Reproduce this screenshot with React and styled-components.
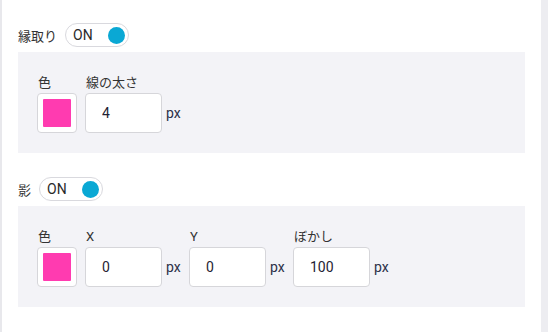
import React from 'react'
import styled, { createGlobalStyle } from 'styled-components'

const sections = [
  {
    title: '縁取り',
    fields: [{ label: '線の太さ', value: '4' }]
  },
  {
    title: '影',
    fields: [
      { label: 'X', value: '0' },
      { label: 'Y', value: '0' },
      { label: 'ぼかし', value: '100' }
    ]
  }
]

const App = () => {
  return (
    <>
      <GlobalStyle />
      <Frame>
        <Content>
          {sections.map(section => (
            <Section key={section.title}>
              <Header>
                <Title>{section.title}</Title>
                <Toggle>
                  <span>ON</span>
                  <Knob />
                </Toggle>
              </Header>
              <Panel>
                <Column>
                  <Label>色</Label>
                  <Swatch>
                    <SwatchFill color="#ff3bb0" />
                  </Swatch>
                </Column>
                {section.fields.map(field => (
                  <Column key={field.label}>
                    <Label>{field.label}</Label>
                    <InputRow>
                      <Input defaultValue={field.value} />
                      <Unit>px</Unit>
                    </InputRow>
                  </Column>
                ))}
              </Panel>
            </Section>
          ))}
        </Content>
        <Scrollbar />
      </Frame>
    </>
  )
}

export default App

//region Style

const GlobalStyle = createGlobalStyle`
  body {
    margin: 0;
    background: #fff;
    font-family: Roboto, "Noto Sans CJK JP", sans-serif;
  }
`

const Frame = styled.div`
  display: flex;
  height: 332px;
  width: 548px;
  box-sizing: border-box;
  border-left: 2px solid #e8e8ec;
`

const Content = styled.div`
  flex: 1;
  box-sizing: border-box;
  padding: 23px 16px 0 16px;
  display: flex;
  flex-direction: column;
  gap: 24px;
`

const Scrollbar = styled.div`
  width: 7px;
  background: #ededf1;
`

const Section = styled.div`
  display: flex;
  flex-direction: column;
  gap: 5px;
`

const Header = styled.div`
  display: flex;
  align-items: center;
  gap: 8px;
`

const Title = styled.div`
  font-size: 13px;
  color: #333;
`

const Toggle = styled.div`
  box-sizing: border-box;
  width: 64px;
  height: 24px;
  border: 1px solid #d9d9de;
  border-radius: 12px;
  background: #fff;
  display: flex;
  align-items: center;
  justify-content: space-between;
  padding: 0 3px 0 7px;
  font-size: 14px;
  color: #2a2a2a;
`

const Knob = styled.div`
  width: 17px;
  height: 17px;
  border-radius: 50%;
  background: #0aa8d4;
`

const Panel = styled.div`
  box-sizing: border-box;
  width: 507px;
  background: #f3f3f7;
  padding: 23px 19px 20px 19px;
  display: flex;
  gap: 8px;
`

const Column = styled.div`
  display: flex;
  flex-direction: column;
  gap: 2px;
`

const Label = styled.div`
  font-size: 13px;
  line-height: 16px;
  color: #333;
  padding-left: 1px;
`

const Swatch = styled.div`
  box-sizing: border-box;
  width: 40px;
  height: 40px;
  border: 1px solid #d6d6da;
  border-radius: 4px;
  background: #fff;
  padding: 5px;
`

const SwatchFill = styled.div`
  width: 100%;
  height: 100%;
  border-radius: 1px;
  background: ${p => p.color};
`

const InputRow = styled.div`
  display: flex;
  align-items: center;
`

const Input = styled.input`
  box-sizing: border-box;
  width: 77px;
  height: 40px;
  border: 1px solid #d6d6da;
  border-radius: 4px;
  background: #fff;
  padding: 0 0 0 16px;
  font-family: Roboto, sans-serif;
  font-size: 14px;
  color: #1f2233;
  outline: none;
`

const Unit = styled.span`
  width: 15px;
  padding-left: 4px;
  font-size: 14px;
  color: #2c3048;
`
//endregion
